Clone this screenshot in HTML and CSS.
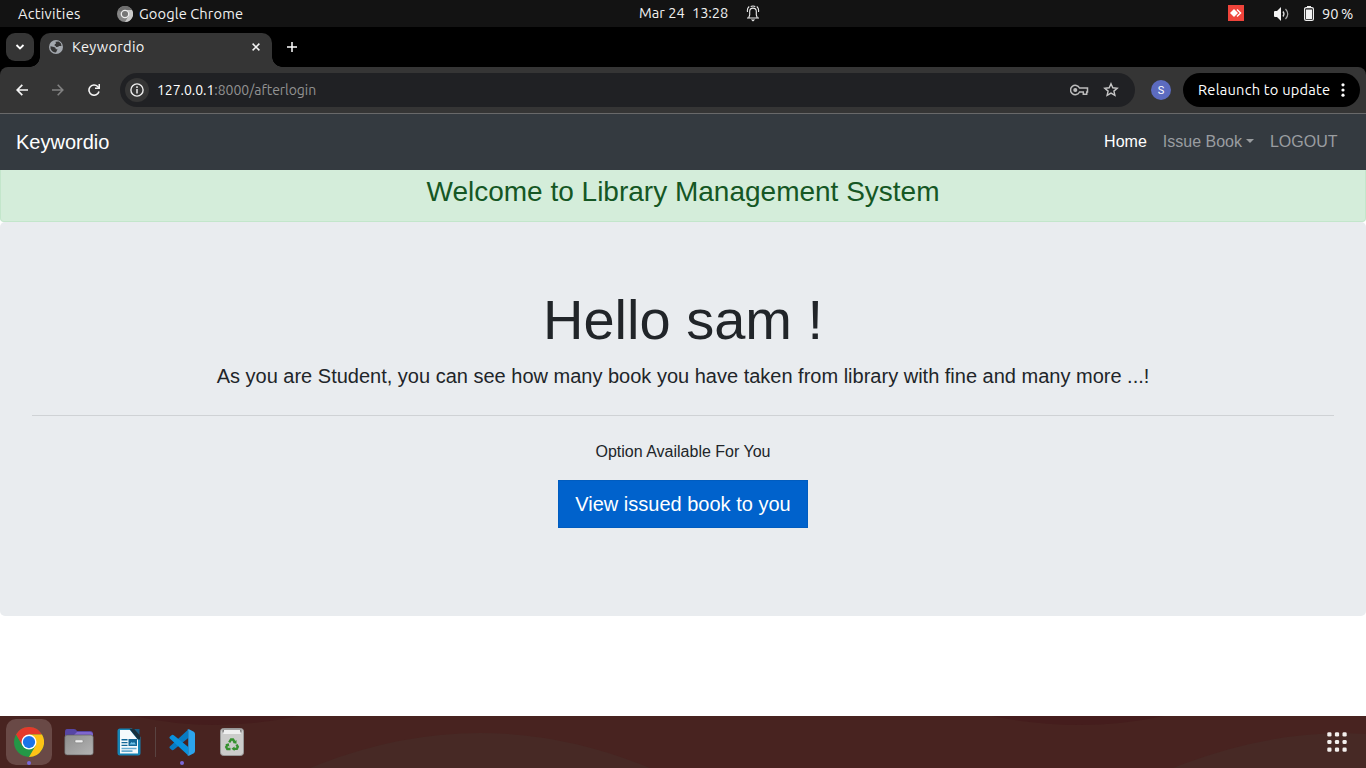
FILE: index.html
```html
<!DOCTYPE html>
<html lang="en">
<head>
<meta charset="utf-8">
<title>Keywordio</title>
<link rel="stylesheet" href="styles.css">
</head>
<body>
<div class="desktop">
  <header class="topbar">
    <span class="activities">Activities</span>
    <svg class="app-icon" width="16" height="16" viewBox="0 0 16 16"><circle cx="8" cy="8" r="8" fill="#858585"/><path d="M8 4h7A8 8 0 0 1 8 16l3.500-6z" fill="#c9c9c9"/><path d="M1 4a8 8 0 0 1 14 0H8L4.500 6z" fill="#6e6e6e"/><circle cx="8" cy="8" r="3.700" fill="#777" stroke="#eee" stroke-width="1.300"/></svg>
    <span class="app-name">Google Chrome</span>
    <div class="clock"><span class="date">Mar 24</span><span class="time">13:28</span>
      <svg width="14" height="17" viewBox="0 0 14 17" fill="none" stroke="#eee" stroke-width="1.100"><path d="M2.800 12.500L3.700 10V6.500C3.700 2 10.300 2 10.300 6.500V10l.9 2.500M1 13h12M1.500 7Q.8 3.500 3.200 1.500M12.500 7Q13.200 3.500 10.800 1.500M4.700 1.500Q7 .4 9.300 1.500"/><path d="M4.800 14.500h4.400L7 16.500z" fill="#eee" stroke="none"/></svg>
    </div>
    <div class="tray">
      <svg class="anydesk" width="16" height="16" viewBox="0 0 16 16"><path fill="#ef443b" d="M0 0h16v16H0z"/><path d="M2 8l4-4 4 4-4 4z" fill="#fff"/><path d="M9 4.400L12.600 8 9 11.600" fill="none" stroke="#fff" stroke-width="1.400"/></svg>
      <svg class="volume" width="16" height="14" viewBox="0 0 16 14"><path d="M0 5q0-1 1-1h2l4-4v14l-4-4H1q-1 0-1-1z" fill="#f2f2f2"/><path d="M9 4.500q2 2.500 0 5" fill="none" stroke="#ddd" stroke-width="1.300"/><path d="M11.500 2q4.500 5 0 10" fill="none" stroke="#aaa" stroke-width="1.200"/></svg>
      <svg class="battery" width="10" height="15" viewBox="0 0 10 15"><path d="M3 0h4v2H3z" fill="#eee"/><rect x=".6" y="1.600" width="8.800" height="12.800" rx="1.500" fill="none" stroke="#eee" stroke-width="1.200"/><path d="M2 3.500h6V13H2z" fill="#f2f2f2"/></svg>
      <span class="percent">90&#8201;%</span>
    </div>
  </header>

  <div class="tabstrip">
    <div class="tab-search"><svg width="10" height="8" viewBox="0 0 10 8"><path d="M1.500 2L5 5.500 8.500 2" fill="none" stroke="#fff" stroke-width="1.800"/></svg></div>
    <div class="tab">
      <svg width="14" height="14" viewBox="0 0 14 14"><circle cx="7" cy="7" r="7" fill="#a3a8ae"/><path d="M6.500 1.700L9.800 1.600Q12.700 3.200 12.500 6H10Q9.600 7.300 7 7Q7.300 5.800 5.500 5.600Q5.300 4 7 3.600zM1.500 6.300L5 7.100Q7 7.500 6.800 9.300H8.500L7 12.600Q3 12.300 1.500 8.500z" fill="#353535"/></svg>
      <span class="tab-title">Keywordio</span>
      <svg class="close" width="8" height="8" viewBox="0 0 8 8"><path d="M.6.600l6.800 6.800M7.400.600L.600 7.400" stroke="#f4f4f4" stroke-width="1.500"/></svg>
    </div>
    <svg class="newtab" width="10" height="10" viewBox="0 0 10 10"><path d="M5 0v10M0 5h10" stroke="#fff" stroke-width="1.500"/></svg>
  </div>

  <div class="toolbar">
    <svg class="back" width="12" height="12" viewBox="0 0 12 12"><path d="M12 6H1.500M6.300.800L1.200 6l5.100 5.200" fill="none" stroke="#f4f4f4" stroke-width="1.700"/></svg>
    <svg class="forward" width="12" height="12" viewBox="0 0 12 12"><path d="M0 6h10.500M5.700.800L10.800 6l-5.100 5.200" fill="none" stroke="#818181" stroke-width="1.600"/></svg>
    <svg class="reload" width="12" height="12" viewBox="0 0 12 12"><path d="M11 7.500A5.100 5.100 0 1 1 9.700 2.500L11 4" fill="none" stroke="#f4f4f4" stroke-width="1.600"/><path d="M12 0v5H7V3.500h3.500V0z" fill="#f4f4f4"/></svg>
    <div class="omnibox">
      <span class="info"><svg width="14" height="14" viewBox="0 0 14 14"><circle cx="7" cy="7" r="6.100" fill="none" stroke="#eee" stroke-width="1.400"/><path d="M7 3.300v1.600M7 6v4.500" stroke="#eee" stroke-width="1.500"/></svg></span>
      <span class="url"><span class="host">127.0.0.1</span>:8000/afterlogin</span>
      <svg class="key" width="19" height="12" viewBox="0 0 19 12" fill="none" stroke="#bcbcbc" stroke-width="1.500"><path d="M9.500 4A4.700 4.700 0 1 0 9.500 8h3.800v2.200h3.400V8h.8V4z"/><circle cx="5.300" cy="6" r="1.300" fill="#bcbcbc"/></svg>
      <svg class="star" width="16" height="15" viewBox="0 0 16 15"><path d="M8 1.800l1.800 4 4.400.400-3.300 2.900 1 4.300L8 11.100l-3.900 2.300 1-4.300-3.300-2.900 4.400-.400z" fill="none" stroke="#c7c7c7" stroke-width="1.400"/></svg>
    </div>
    <span class="avatar">S</span>
    <div class="relaunch"><span class="relaunch-label">Relaunch to update</span><svg width="4" height="14" viewBox="0 0 4 14" fill="#fff"><circle cx="2" cy="1.800" r="1.600"/><circle cx="2" cy="7" r="1.600"/><circle cx="2" cy="12.200" r="1.600"/></svg></div>
  </div>

  <main class="page">
    <nav class="navbar">
      <a class="brand">Keywordio</a>
      <a class="nav-link active">Home</a><a class="nav-link dropdown">Issue Book</a><a class="nav-link">LOGOUT</a>
    </nav>
    <div class="alert"><h3>Welcome to Library Management System</h3></div>
    <section class="jumbotron">
      <h1>Hello sam !</h1>
      <p class="lead">As you are Student, you can see how many book you have taken from library with fine and many more ...!</p>
      <hr>
      <p class="option">Option Available For You</p>
      <a class="btn">View issued book to you</a>
    </section>
  </main>

  <footer class="dock">
    <svg class="wallpaper" width="1366" height="52" viewBox="0 0 1366 52"><path fill="#482320" d="M0 0h1366v52H0z"/><path d="M134 0Q216 18 298 0zM992 0Q1080 18 1164 0z" fill="#451d1d"/><path d="M310 52Q395 17 480 17T650 52zM1173 52Q1260 17 1345 17L1366 18V52z" fill="#472925"/></svg>
    <div class="dock-item selected">
      <svg width="30" height="30" viewBox="0 0 48 48"><circle cx="24" cy="24" r="24" fill="#249746"/><path d="M3.200 12A24 24 0 0 1 44.800 12H24L13.600 30z" fill="#e4392c"/><path d="M44.800 12A24 24 0 0 1 24 48L34.400 30 24 12z" fill="#fdc316"/><circle cx="24" cy="24" r="12" fill="#fff"/><circle cx="24" cy="24" r="9.800" fill="#1b73e8"/></svg><i class="running"></i>
    </div>
    <div class="dock-item">
      <svg width="30" height="28" viewBox="0 0 30 28"><defs><linearGradient id="folder" x2="1" y2="1"><stop stop-color="#8d8d8d"/><stop offset="1" stop-color="#b4b4b4"/></linearGradient></defs><path d="M1 4q0-3 2-3h7q2 0 3 2h13q3 0 3 3v10H1z" fill="#5746a5"/><path d="M1 7h9l3-3h13q3 0 3 3v3H1z" fill="#8067cf"/><rect x=".7" y="7" width="28.600" height="20" rx="2.500" fill="url(#folder)" stroke="#555" stroke-width=".6"/><rect x="11" y="11.800" width="8" height="3" rx="1" fill="#eee" stroke="#777" stroke-width=".5"/></svg>
    </div>
    <div class="dock-item writer">
      <svg width="24" height="28" viewBox="0 0 24 28"><path d="M3 .5h12L23.500 9v16q0 2.500-2.500 2.500H3Q.5 27.500.5 25V3Q.5.5 3 .5z" fill="#1584b5"/><path d="M3 2h10l8 10v13.500H3z" fill="#f5fafc"/><path d="M17 1h5.500v6z" fill="#155f88"/><path d="M12.500 1H17l6 7v3.500h-2z" fill="#17303d"/><path d="M4.500 11.800h6m-6 2.800h6m-6 2.800h6" stroke="#126797" stroke-width="1.400"/><path d="M4.500 20.500h15m-15 2.600h11" stroke="#67acd0" stroke-width="1.600"/><path fill="#126797" d="M11.500 11h8.500v7h-8.500z"/><path d="M12.500 16.500l2-2.500 1.500 1 1-1 2 2.500z" fill="#6fc2e8"/></svg>
    </div>
    <span class="divider"></span>
    <div class="dock-item code">
      <svg width="26" height="27" viewBox="0 0 27 27" preserveAspectRatio="none"><path d="M20 .6L.8 17.500q-.8 1 0 1.800L3 21q1 .5 2-.3L20 9z" fill="#087bc3"/><path d="M20 26.400L.8 9.500q-.8-1 0-1.800L3 6q1-.5 2 .3L20 18z" fill="#0991dd"/><path d="M19 1q.8-1 2.300-.5l4.500 2.300Q27 3.500 27 5v17q0 1.500-1.200 2.200l-4.500 2.300q-1.500.5-2.300-.5 1 .3 1-1V2q0-1.300-1-1z" fill="#2ca4ed"/></svg><i class="running"></i>
    </div>
    <div class="dock-item">
      <svg width="24" height="28" viewBox="0 0 24 28"><rect x=".5" y=".5" width="23" height="27" rx="3" fill="#cccccb" stroke="#989898"/><path d="M2.500 1.500h19v3h-19z" fill="#747474"/><path d="M4 2h16l.8 4H3.200z" fill="#efefef"/><g fill="none" stroke="#36912f" stroke-width="2.400"><path d="M9.200 14.300l1.800-2.800h2l1.600 2.500M16.500 16.500l1.300 2.300-1 2.100H14M10.500 21H7.300L6.200 19l1.400-2.500"/></g><path d="M16.500 12v3.800l-3.800-.8zM14.500 18.500v4.500l-3-2.200zM5.200 16.200l3.600-1 .6 3.600z" fill="#36912f"/></svg>
    </div>
    <svg class="apps" width="20" height="20" viewBox="0 0 20 20" fill="#f3efed"><rect x=".3" y=".3" width="4.200" height="4.200" rx="1.300"/><rect x="7.900" y=".3" width="4.200" height="4.200" rx="1.300"/><rect x="15.500" y=".3" width="4.200" height="4.200" rx="1.300"/><rect x=".3" y="7.900" width="4.200" height="4.200" rx="1.300"/><rect x="7.900" y="7.900" width="4.200" height="4.200" rx="1.300"/><rect x="15.500" y="7.900" width="4.200" height="4.200" rx="1.300"/><rect x=".3" y="15.500" width="4.200" height="4.200" rx="1.300"/><rect x="7.900" y="15.500" width="4.200" height="4.200" rx="1.300"/><rect x="15.500" y="15.500" width="4.200" height="4.200" rx="1.300"/></svg>
  </footer>
</div>
</body>
</html>
```
FILE: styles.css
```css
* { box-sizing: border-box; }
body { margin: 0; overflow: hidden; font-family: Ubuntu, "Noto Sans", sans-serif; }
svg { display: block; flex: none; }
.desktop { width: 1366px; height: 768px; display: grid; grid-template-rows: 27px 40px 47px 602px 52px; background: #000; }
.topbar { background: #131313; color: #f0f0f0; display: flex; align-items: center; padding: 0 13px 0 18px; font-size: 14.667px; line-height: 26px; white-space: nowrap; }
.activities { width: 99px; letter-spacing: .25px; }
.app-name { margin-left: 6px; width: 500px; letter-spacing: .1px; }
.clock { display: flex; align-items: center; line-height: 24px; height: 24px; margin-bottom: 2px; }
.clock svg { margin: 2px 0 0 -1px; }
.date { width: 53px; letter-spacing: 0; }
.time { width: 55px; letter-spacing: -.1px; }
.tray { margin-left: auto; display: flex; align-items: center; }
.anydesk { margin-bottom: 1px; }
.volume { margin-left: 30px; }
.battery { margin-left: 14px; margin-bottom: 1px; }
.percent { margin-left: 8px; width: 31px; letter-spacing: 0; }
.tabstrip { background: #000; display: flex; padding: 6px 6px 0; }
.tab-search { width: 28px; height: 28px; border-radius: 9px; background: #353535; display: grid; place-items: center; }
.tab { width: 232px; height: 34px; margin-left: 6px; background: #353535; border-radius: 10px 10px 0 0; display: flex; align-items: center; padding: 0 12px 6px 9px; color: #f4f4f4; font-size: 14.667px; position: relative; }
.tab::before, .tab::after { content: ""; position: absolute; bottom: 0; width: 10px; height: 10px; }
.tab::before { left: -10px; background: radial-gradient(circle at 0 0, transparent 9.500px, #353535 10px); }
.tab::after { right: -10px; background: radial-gradient(circle at 100% 0, transparent 9.500px, #353535 10px); }
.tab-title { margin-left: 9px; padding-bottom: 2px; letter-spacing: .25px; }
.close { margin-left: auto; }
.newtab { margin: 9px 0 0 15px; }
.toolbar { background: #353535; border-bottom: 1px solid #69696a; border-radius: 8px 8px 0 0; display: flex; align-items: center; padding: 0 6px 0 16px; }
.forward { margin-left: 24px; }
.reload { margin-left: 24px; }
.omnibox { width: 1015px; height: 34px; margin-left: 20px; border-radius: 17px; background: #202124; display: flex; align-items: center; padding: 0 16px 0 5px; }
.info { width: 24px; height: 24px; border-radius: 50%; background: #353535; display: grid; place-items: center; }
.url { margin-left: 8px; font-size: 14px; color: #929292; letter-spacing: -.04px; }
.host { color: #fff; }
.key { margin-left: auto; }
.star { margin: 0 0 1px 14px; }
.avatar { width: 20px; height: 20px; margin-left: 16px; border-radius: 50%; background: #5c6bc0; color: #fff; font: 11px/21px Roboto, sans-serif; text-align: center; }
.relaunch { width: 177px; height: 34px; margin-left: 12px; border-radius: 17px; background: #000; color: #fff; display: flex; align-items: center; justify-content: space-between; padding: 0 15px; font-size: 14.667px; letter-spacing: .22px; white-space: nowrap; }
.relaunch-label { padding-bottom: 2px; }
.page { background: #fff; font-family: "Liberation Sans", Arial, sans-serif; font-size: 16px; line-height: 1.5; color: #212529; }
.navbar { height: 56px; background: #343a40; display: flex; align-items: center; padding: 0 20.500px 0 16px; }
.brand { color: #fff; font-size: 20px; margin-right: auto; }
.nav-link { padding: 0 8px; color: #9a9da0; }
.active { color: #fff; }
.dropdown::after { content: ""; display: inline-block; margin-left: 4px; vertical-align: 4px; border-top: 4.800px solid; border-left: 4.800px solid transparent; border-right: 4.800px solid transparent; }
.alert { height: 52px; background: #d4edda; border: 1px solid #c3e6cb; border-top: 0; border-radius: 0 0 4px 4px; color: #155724; text-align: center; padding-top: 5px; }
h1, h3, p { margin: 0; font-weight: 400; }
h3 { font-size: 28px; line-height: 33.600px; }
.jumbotron { height: 394px; background: #e9ecef; border-radius: 5px; padding: 64px 32px; text-align: center; }
h1 { font-size: 56px; line-height: 67.200px; margin-bottom: 8px; }
.lead { font-size: 20px; }
hr { border: 0; border-top: 1px solid #cfd2d5; margin: 24px 0; }
.option { margin-bottom: 16px; }
.btn { display: inline-block; height: 48px; background: #0062cc; border: 1px solid #005cbf; color: #fff; font-size: 20px; line-height: 30px; padding: 8px 16px; }
.dock { position: relative; display: flex; align-items: center; padding: 0 19px 0 6px; }
.wallpaper { position: absolute; inset: 0; }
.dock-item { width: 46px; height: 46px; margin-right: 4px; border-radius: 10px; display: grid; place-items: center; position: relative; }
.writer { margin-right: 3px; }
.selected { background: #694946; }
.running { position: absolute; width: 4px; height: 4px; border-radius: 50%; background: #7967d8; left: 21px; bottom: 0; }
.divider { width: 1px; height: 30px; margin-right: 3px; background: #594341; position: relative; }
.apps { margin-left: auto; position: relative; }
```
